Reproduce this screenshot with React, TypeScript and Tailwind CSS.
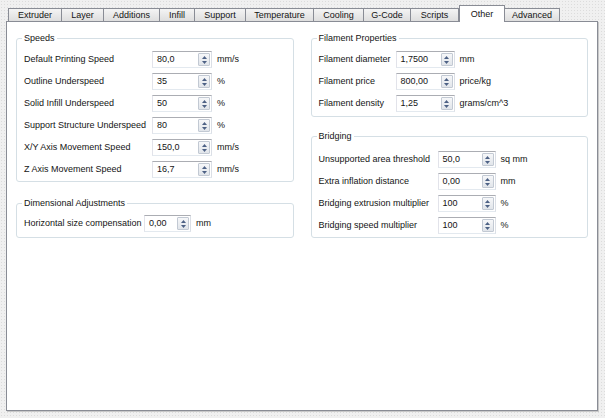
import React from "react";

type Field = { label: string; value: string; unit: string };

const tabs = [
  { name: "Extruder", w: "w-[54px]" },
  { name: "Layer", w: "w-[43px]" },
  { name: "Additions", w: "w-[57px]" },
  { name: "Infill", w: "w-[36px]" },
  { name: "Support", w: "w-[52px]" },
  { name: "Temperature", w: "w-[69px]" },
  { name: "Cooling", w: "w-[51px]" },
  { name: "G-Code", w: "w-[48px]" },
  { name: "Scripts", w: "w-[49px]" },
  { name: "Other", w: "w-[46px]", active: true },
  { name: "Advanced", w: "w-[56px]" },
];

const speeds: Field[] = [
  { label: "Default Printing Speed", value: "80,0", unit: "mm/s" },
  { label: "Outline Underspeed", value: "35", unit: "%" },
  { label: "Solid Infill Underspeed", value: "50", unit: "%" },
  { label: "Support Structure Underspeed", value: "80", unit: "%" },
  { label: "X/Y Axis Movement Speed", value: "150,0", unit: "mm/s" },
  { label: "Z Axis Movement Speed", value: "16,7", unit: "mm/s" },
];

const filament: Field[] = [
  { label: "Filament diameter", value: "1,7500", unit: "mm" },
  { label: "Filament price", value: "800,00", unit: "price/kg" },
  { label: "Filament density", value: "1,25", unit: "grams/cm^3" },
];

const bridging: Field[] = [
  { label: "Unsupported area threshold", value: "50,0", unit: "sq mm" },
  { label: "Extra inflation distance", value: "0,00", unit: "mm" },
  { label: "Bridging extrusion multiplier", value: "100", unit: "%" },
  { label: "Bridging speed multiplier", value: "100", unit: "%" },
];

const SpinBox = ({ value, width }: { value: string; width: string }) => (
  <div
    className={`flex h-[17px] ${width} shrink-0 items-stretch border border-[#abadb3] border-b-[#e3e9ef] border-l-[#e2e3ea] border-r-[#dbdfe6] bg-white`}
  >
    <span className="flex-1 pl-[4px] leading-[15px]">{value}</span>
    <div className="m-[1px] flex w-[12px] flex-col items-center justify-center gap-[2px] rounded-[1px] border border-[#c2c9d3] bg-gradient-to-b from-[#f6f7f9] to-[#e1e5ea]">
      <svg width="5" height="3" viewBox="0 0 5 3">
        <path d="M0 3 L2.5 0 L5 3 Z" fill="#4d6185" />
      </svg>
      <svg width="5" height="3" viewBox="0 0 5 3">
        <path d="M0 0 L2.5 3 L5 0 Z" fill="#4d6185" />
      </svg>
    </div>
  </div>
);

const Row = ({
  field,
  labelW,
  boxW,
}: {
  field: Field;
  labelW: string;
  boxW: string;
}) => (
  <div className="flex h-[17px] items-center">
    <span className={`${labelW} shrink-0 whitespace-nowrap`}>{field.label}</span>
    <SpinBox value={field.value} width={boxW} />
    <span className="ml-[5px] whitespace-nowrap">{field.unit}</span>
  </div>
);

const Group = ({
  title,
  className,
  children,
}: {
  title: string;
  className: string;
  children: React.ReactNode;
}) => (
  <fieldset
    className={`rounded-[3px] border border-[#d5dfe5] px-[7px] ${className}`}
  >
    <legend className="ml-[-2px] px-[2px] leading-[12px]">{title}</legend>
    <div className="flex flex-col gap-[5px]">{children}</div>
  </fieldset>
);

export default function App() {
  return (
    <div
      className="h-[418px] w-[605px] overflow-hidden bg-[#f0f0f0] bg-[radial-gradient(#dcdcdc_0.6px,transparent_0.8px)] bg-[length:3px_3px] px-[6px] pt-[4px] text-[9px] text-[#141414]"
      style={{ fontFamily: '"Liberation Sans", Arial, sans-serif' }}
    >
      <div className="flex h-[17px] items-end pl-[2px]">
        {tabs.map((tab) =>
          tab.active ? (
            <div
              key={tab.name}
              className={`${tab.w} relative z-10 -mb-px flex h-[17px] items-start justify-center border border-b-0 border-[#898c95] bg-white pt-[2px] leading-[12px]`}
            >
              {tab.name}
            </div>
          ) : (
            <div
              key={tab.name}
              className={`${tab.w} -ml-px flex h-[13px] items-center justify-center border border-b-0 border-[#898c95] bg-gradient-to-b from-[#f4f4f4] to-[#dedede] leading-[12px] first:ml-0`}
            >
              {tab.name}
            </div>
          ),
        )}
      </div>
      <div className="grid h-[390px] w-[592px] grid-cols-2 gap-[17px] border border-[#898c95] bg-white px-[9px] pt-[10px] shadow-[1px_1px_0_#c8c8c8]">
        <div className="flex flex-col">
          <Group title="Speeds" className="pt-[7px] pb-[3px]">
            {speeds.map((f) => (
              <Row key={f.label} field={f} labelW="w-[128px]" boxW="w-[60px]" />
            ))}
          </Group>
          <Group title="Dimensional Adjustments" className="mt-[15px] pt-[6px] pb-[5px]">
            <Row
              field={{ label: "Horizontal size compensation", value: "0,00", unit: "mm" }}
              labelW="w-[120px]"
              boxW="w-[47px]"
            />
          </Group>
        </div>
        <div className="flex flex-col">
          <Group title="Filament Properties" className="pt-[7px] pb-[4px]">
            {filament.map((f) => (
              <Row key={f.label} field={f} labelW="w-[77px]" boxW="w-[59px]" />
            ))}
          </Group>
          <Group title="Bridging" className="mt-[13px] pt-[9px] pb-[3px]">
            {bridging.map((f) => (
              <Row key={f.label} field={f} labelW="w-[119px]" boxW="w-[58px]" />
            ))}
          </Group>
        </div>
      </div>
    </div>
  );
}
